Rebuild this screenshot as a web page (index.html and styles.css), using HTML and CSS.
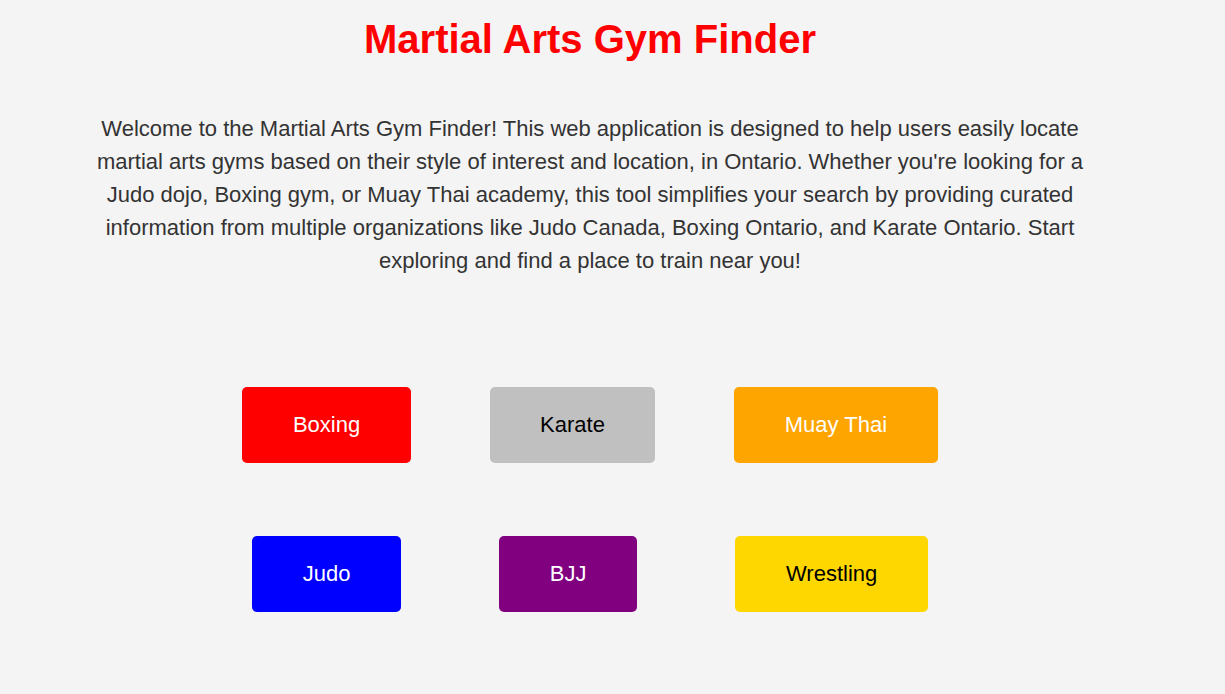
FILE: index.html
```html
<!DOCTYPE html>
<html lang="en">
<head>
<meta charset="utf-8">
<title>Martial Arts Gym Finder</title>
<link rel="stylesheet" href="styles.css">
</head>
<body>
<div class="page">
  <h1 class="title">Martial Arts Gym Finder</h1>
  <p class="intro">Welcome to the Martial Arts Gym Finder! This web application is designed to help users easily locate martial arts gyms based on their style of interest and location, in Ontario. Whether you're looking for a Judo dojo, Boxing gym, or Muay Thai academy, this tool simplifies your search by providing curated information from multiple organizations like Judo Canada, Boxing Ontario, and Karate Ontario. Start exploring and find a place to train near you!</p>
  <div class="buttons">
    <div class="row">
      <button class="btn btn-boxing">Boxing</button>
      <button class="btn btn-karate">Karate</button>
      <button class="btn btn-muaythai">Muay Thai</button>
    </div>
    <div class="row">
      <button class="btn btn-judo">Judo</button>
      <button class="btn btn-bjj">BJJ</button>
      <button class="btn btn-wrestling">Wrestling</button>
    </div>
  </div>
</div>
</body>
</html>
```

FILE: styles.css
```css
html, body {
  margin: 0;
  padding: 0;
  background: #f4f4f4;
  font-family: "Liberation Sans", Arial, sans-serif;
}

.page {
  width: 1180px;
  padding-top: 16px;
}

.title {
  margin: 0;
  font-size: 40px;
  line-height: 46px;
  font-weight: bold;
  color: #ff0000;
  text-align: center;
}

.intro {
  width: 1000px;
  margin: 50px auto 0;
  font-size: 22px;
  line-height: 33px;
  color: #333333;
  text-align: center;
}

.buttons {
  width: 774px;
  margin: 110px auto 0;
}

.row {
  display: flex;
  justify-content: space-around;
}

.row + .row {
  margin-top: 73px;
}

.btn {
  padding: 25px 50.5px;
  font-family: "Liberation Sans", Arial, sans-serif;
  font-size: 22px;
  line-height: 26px;
  border: none;
  border-radius: 5px;
  color: #ffffff;
  cursor: pointer;
}

.btn-boxing { background: #ff0000; }
.btn-karate { background: #c0c0c0; color: #000000; }
.btn-muaythai { background: #ffa500; }
.btn-judo { background: #0000ff; }
.btn-bjj { background: #800080; }
.btn-wrestling { background: #ffd700; color: #000000; }
```
